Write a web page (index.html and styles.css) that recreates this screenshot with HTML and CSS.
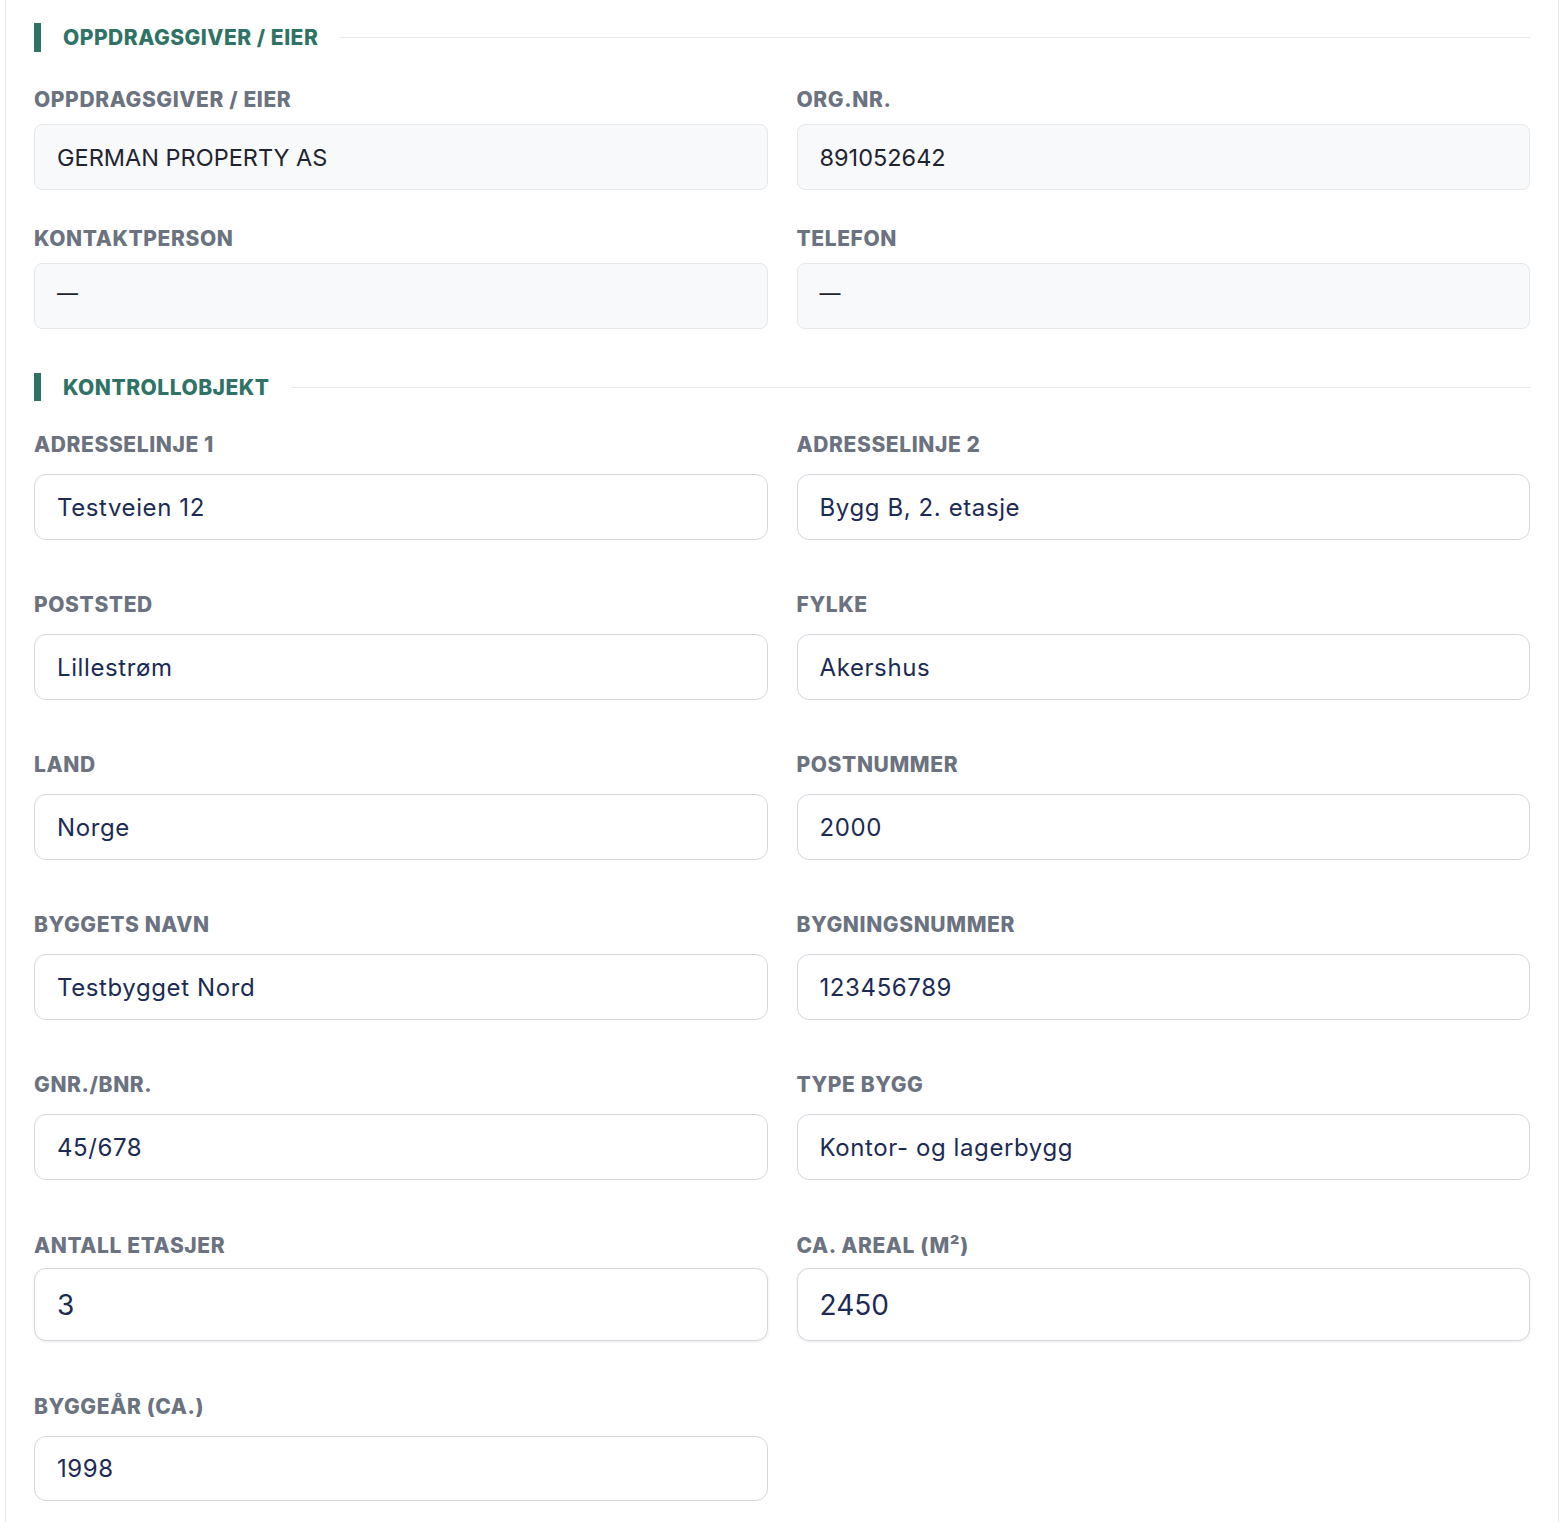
FILE: index.html
```html
<!DOCTYPE html>
<html lang="no">

<head>
  <meta charset="UTF-8" />
  <meta name="viewport" content="width=device-width, initial-scale=1" />
  <title>Kontrollobjekt</title>
  <link rel="stylesheet" href="styles.css">
</head>

<body>
  <div class="panel">
    <!-- Oppdragsgiver -->
    <div class="section-title first">
      <span class="bar"></span>
      <h2>Oppdragsgiver / Eier</h2>
      <span class="rule"></span>
    </div>
    <div class="grid readonly">
      <div class="field">
        <label>Oppdragsgiver / Eier</label>
        <div class="box">GERMAN PROPERTY AS</div>
      </div>
      <div class="field">
        <label>Org.nr.</label>
        <div class="box">891052642</div>
      </div>
      <div class="field">
        <label>Kontaktperson</label>
        <div class="box"><span class="dash">—</span></div>
      </div>
      <div class="field">
        <label>Telefon</label>
        <div class="box"><span class="dash">—</span></div>
      </div>
    </div>

    <!-- Kontrollobjekt -->
    <div class="section-title">
      <span class="bar"></span>
      <h2>Kontrollobjekt</h2>
      <span class="rule"></span>
    </div>
    <div class="grid editable">
      <div class="field">
        <label>Adresselinje 1</label>
        <input type="text" value="Testveien 12">
      </div>
      <div class="field">
        <label>Adresselinje 2</label>
        <input type="text" value="Bygg B, 2. etasje">
      </div>
      <div class="field">
        <label>Poststed</label>
        <input type="text" value="Lillestrøm">
      </div>
      <div class="field">
        <label>Fylke</label>
        <input type="text" value="Akershus">
      </div>
      <div class="field">
        <label>Land</label>
        <input type="text" value="Norge">
      </div>
      <div class="field">
        <label>Postnummer</label>
        <input type="text" value="2000">
      </div>
      <div class="field">
        <label>Byggets navn</label>
        <input type="text" value="Testbygget Nord">
      </div>
      <div class="field">
        <label>Bygningsnummer</label>
        <input type="text" value="123456789">
      </div>
      <div class="field">
        <label>Gnr./Bnr.</label>
        <input type="text" value="45/678">
      </div>
      <div class="field">
        <label>Type bygg</label>
        <input type="text" value="Kontor- og lagerbygg">
      </div>
      <div class="field number">
        <label>Antall etasjer</label>
        <input type="number" value="3">
      </div>
      <div class="field number">
        <label>Ca. areal (m²)</label>
        <input type="number" value="2450">
      </div>
      <div class="field year">
        <label>Byggeår (ca.)</label>
        <input type="text" value="1998">
      </div>
    </div>
  </div>
</body>

</html>
```

FILE: styles.css
```css
* {
  box-sizing: border-box;
}

body {
  margin: 0;
  background: #fff;
  font-family: Inter, "Liberation Sans", sans-serif;
}

.panel {
  margin: 0 1px 0 5px;
  padding: 23px 28px 20px;
  border: 1px solid #e6e7eb;
  border-top: none;
  border-bottom: none;
  background: #fff;
  min-height: 1522px;
}

/* section headings with green accent bar */
.section-title {
  display: flex;
  align-items: center;
  height: 28px;
  margin-top: 44px;
}

.section-title.first {
  margin-top: 0;
  height: 29px;
}

.section-title .bar {
  width: 7px;
  align-self: stretch;
  background: #2f7366;
}

.section-title h2 {
  margin: 0 22px;
  font-size: 21px;
  font-weight: 800;
  letter-spacing: 0.5px;
  text-transform: uppercase;
  color: #2f7366;
  white-space: nowrap;
}

.section-title .rule {
  flex: 1;
  height: 1px;
  background: #e6e7eb;
}

.grid {
  display: grid;
  grid-template-columns: 1fr 1fr;
  column-gap: 29px;
}

.grid.readonly {
  margin-top: 34px;
  row-gap: 35px;
}

.grid.editable {
  margin-top: 29px;
  row-gap: 50px;
}

.field {
  display: flex;
  flex-direction: column;
}

.field label {
  display: block;
  height: 26px;
  line-height: 30px;
  font-size: 21px;
  font-weight: 800;
  letter-spacing: 0.6px;
  text-transform: uppercase;
  color: #6b7280;
}

.readonly .field label {
  line-height: 28px;
  margin-bottom: 12px;
}

.box {
  height: 66px;
  padding: 0 22px;
  display: flex;
  align-items: center;
  background: #f8f9fb;
  border: 1px solid #e5e7eb;
  border-radius: 8px;
  font-size: 23.5px;
  color: #1f2430;
}

.box .dash {
  font-size: 21px;
  margin-top: -5px;
}

.editable .field label {
  margin-bottom: 18px;
}

.editable input {
  width: 100%;
  height: 66px;
  padding: 0 22px;
  font-family: Inter, "Liberation Sans", sans-serif;
  font-size: 24px;
  letter-spacing: 0.6px;
  color: #1c2b55;
  background: #fff;
  border: 1px solid #d5d7df;
  border-radius: 12px;
  outline: none;
}

.editable .field.number label {
  line-height: 32px;
  margin-bottom: 12px;
}

.editable .field.number input {
  height: 73px;
  font-size: 28px;
  letter-spacing: 0;
  box-shadow: 0 1px 3px rgba(0, 0, 0, 0.08);
  -moz-appearance: textfield;
}

.editable .field.number input::-webkit-inner-spin-button,
.editable .field.number input::-webkit-outer-spin-button {
  -webkit-appearance: none;
  margin: 0;
}

.editable .field.year label {
  line-height: 32px;
  margin-bottom: 19px;
}

.editable .field.year input {
  height: 65px;
}
```
